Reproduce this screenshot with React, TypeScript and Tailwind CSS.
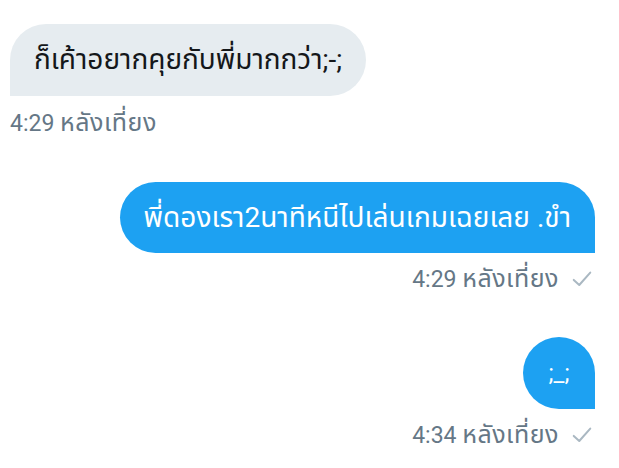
import React from "react";

function Check() {
  return (
    <svg width="22" height="22" viewBox="0 0 24 24" className="ml-[12px] mr-[2px]">
      <path d="M3 13 L9 18.5 L21 5" fill="none" stroke="#aab8c2" strokeWidth="2.2" strokeLinecap="round" strokeLinejoin="round" />
    </svg>
  );
}

function Stamp({ time }: { time: string }) {
  return (
    <span className="text-[23px] text-[#657786] leading-[30px]">
      {time} <span className="text-[25px] tracking-[0.5px]">หลังเที่ยง</span>
    </span>
  );
}

export default function App() {
  return (
    <div
      className="w-[619px] h-[468px] bg-white overflow-hidden flex flex-col pl-[10px] pr-[24px] pt-[24px]"
      style={{ fontFamily: "Roboto, 'Noto Sans', 'Noto Sans Thai', sans-serif" }}
    >
      <div className="flex flex-col items-start">
        <div className="bg-[#e6ecf0] rounded-[36px] rounded-bl-none px-[24px] h-[72px] flex items-center text-[28px] text-[#14171a]">
          ก็เค้าอยากคุยกับพี่มากกว่า;-;
        </div>
        <div className="mt-[12px] flex items-center h-[30px]">
          <Stamp time="4:29" />
        </div>
      </div>

      <div className="flex flex-col items-end mt-[44px]">
        <div className="bg-[#1da1f2] rounded-[36px] rounded-br-none px-[24px] h-[71px] flex items-center text-[28px] text-white">
          พี่ดองเรา2นาทีหนีไปเล่นเกมเฉยเลย .ขำ
        </div>
        <div className="mt-[11px] flex items-center h-[30px]">
          <Stamp time="4:29" />
          <Check />
        </div>
      </div>

      <div className="flex flex-col items-end mt-[43px]">
        <div className="bg-[#1da1f2] rounded-[36px] rounded-br-none w-[72px] h-[72px] flex items-center justify-center text-[24px] text-white">
          ;_;
        </div>
        <div className="mt-[11px] flex items-center h-[30px]">
          <Stamp time="4:34" />
          <Check />
        </div>
      </div>
    </div>
  );
}
